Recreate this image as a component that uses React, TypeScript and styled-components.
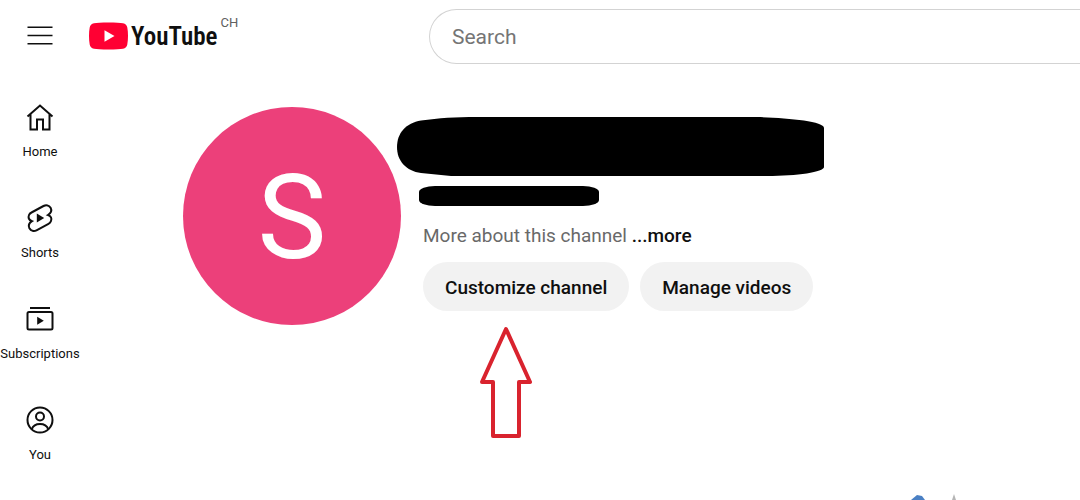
import React from "react";
import styled, { createGlobalStyle } from "styled-components";

const GlobalStyle = createGlobalStyle`
  * { box-sizing: border-box; }
  body {
    margin: 0;
    background: #fff;
    color: #0f0f0f;
    font-family: Roboto, "Liberation Sans", sans-serif;
    overflow-x: hidden;
  }
  button, input { font: inherit; color: inherit; }
`;

const Page = styled.div`
  min-height: 100vh;
  display: flex;
  flex-direction: column;
`;

const Header = styled.header`
  display: flex;
  align-items: center;
  height: 72px;
  padding-left: 24px;
`;

const IconButton = styled.button`
  display: flex;
  padding: 0;
  border: 0;
  background: none;
`;

const HeaderStart = styled.div`
  display: flex;
  align-items: center;
  flex: 0 0 405px;
  gap: 33px;
`;

const Logo = styled.a`
  display: flex;
  align-items: center;
  gap: 3px;
  color: #0f0f0f;
  text-decoration: none;
`;

const Wordmark = styled.span`
  padding-top: 2px;
  font-family: "Roboto Condensed", "Liberation Sans Narrow", "Liberation Sans", sans-serif;
  font-size: 25px;
  font-weight: 600;
  line-height: 28px;
`;

const Country = styled.span`
  align-self: flex-start;
  margin-top: -5px;
  font-size: 13px;
  line-height: 14px;
  color: #606060;
`;

const SearchForm = styled.form`
  flex: 1;
  overflow: hidden;
`;

const SearchInput = styled.input`
  display: block;
  width: 100%;
  height: 55px;
  padding: 2px 22px 0;
  border: 1px solid #d3d3d3;
  border-right: 0;
  border-radius: 28px 0 0 28px;
  background: #fff;
  font-size: 21px;
  outline: 0;
  &::placeholder { color: #757575; opacity: 1; }
`;

const Body = styled.div`
  display: flex;
  flex: 1;
`;

const Sidebar = styled.nav`
  display: flex;
  flex-direction: column;
  flex: 0 0 80px;
  gap: 41px;
  padding-top: 29px;
`;

const NavItem = styled.a`
  display: flex;
  flex-direction: column;
  align-items: center;
  gap: 10px;
  color: #0f0f0f;
  font-size: 13px;
  line-height: 18px;
  white-space: nowrap;
  text-decoration: none;
`;

const Main = styled.main`
  flex: 1;
  display: flex;
  flex-direction: column;
  justify-content: space-between;
  padding: 35px 0 0 103px;
`;

const Channel = styled.section`
  display: flex;
  gap: 22px;
`;

const Avatar = styled.div`
  display: flex;
  align-items: center;
  justify-content: center;
  flex: 0 0 218px;
  height: 218px;
  padding-top: 4px;
  border-radius: 50%;
  background: #ec407a;
  color: #fff;
  font-size: 116px;
  line-height: 116px;
`;

const Details = styled.div`
  display: flex;
  flex-direction: column;
  align-items: flex-start;
  padding-top: 10px;
`;

const NameMask = styled.svg`
  display: block;
  margin-left: -26px;
`;

const HandleMask = styled.div`
  width: 180px;
  height: 20px;
  margin: 9px 0 0 -4px;
  border-radius: 16px / 6px;
  background: #000;
`;

const About = styled.p`
  margin: 18px 0 0;
  font-size: 19px;
  line-height: 24px;
  color: #696969;
`;

const MoreButton = styled.button`
  padding: 0;
  border: 0;
  background: none;
  font-weight: 500;
  color: #0f0f0f;
`;

const Actions = styled.div`
  display: flex;
  gap: 11px;
  margin-top: 14px;
`;

const PillButton = styled.button`
  height: 49px;
  padding: 1px 22px 0;
  border: 0;
  border-radius: 25px;
  background: #f2f2f2;
  font-size: 19px;
  font-weight: 500;
  white-space: nowrap;
`;

const Arrow = styled.svg`
  display: block;
  margin: 15px 0 0 56px;
`;

const Illustration = styled.svg`
  display: block;
  margin-left: 725px;
`;

const iconProps = {
  width: 32,
  height: 32,
  viewBox: "0 0 32 32",
  fill: "none",
  stroke: "#0f0f0f",
  strokeWidth: 2,
  "aria-hidden": true,
} as const;

const HomeIcon = () => (
  <svg {...iconProps}>
    <path d="M3.500 15.500 16 4.500l12.500 11M6.500 13.500v15h6.500v-10h6v10h6.500v-15" />
  </svg>
);

const ShortsIcon = () => (
  <svg {...iconProps}>
    <path d="M7.500 10.500 19.500 4C22 2.700 25 3.200 26.600 5.800 28 8.500 26.800 11.200 24 13 27 14 28 16.500 27 19 26.500 20.500 25.500 21.300 24.500 21.800L12.500 28.300C10 29.600 7 29 5.400 26.300 4 23.500 5.200 21 8 19.200 5 18 4 15.500 5 13 5.500 11.700 6.500 11 7.500 10.500Z" />
    <path d="M12.800 11.500v9l7.400-4.500Z" fill="#0f0f0f" stroke="none" />
  </svg>
);

const SubscriptionsIcon = () => (
  <svg {...iconProps}>
    <path d="M6 5h20" />
    <rect x="3.500" y="9" width="25" height="17.500" rx="1.500" />
    <path d="M13.200 13.800v8l6.600-4Z" fill="#0f0f0f" stroke="none" />
  </svg>
);

const YouIcon = () => (
  <svg {...iconProps}>
    <circle cx="16" cy="16" r="12.500" />
    <circle cx="16" cy="12.500" r="4" />
    <path d="M7.800 25.200c1.200-3.400 4.200-5.200 8.200-5.200s7 1.800 8.200 5.200" />
  </svg>
);

const navItems = [
  { label: "Home", Icon: HomeIcon },
  { label: "Shorts", Icon: ShortsIcon },
  { label: "Subscriptions", Icon: SubscriptionsIcon },
  { label: "You", Icon: YouIcon },
];

export default function App() {
  return (
    <Page>
      <GlobalStyle />
      <Header>
        <HeaderStart>
          <IconButton type="button" aria-label="Menu">
            <svg width="32" height="32" viewBox="0 0 32 32" stroke="#0f0f0f" strokeWidth="1.500">
              <path d="M3.500 7.200h25M3.500 15.500h25M3.500 23.800h25" />
            </svg>
          </IconButton>
          <Logo href="#" aria-label="YouTube home">
            <svg width="39" height="28" viewBox="0 0 39 28" aria-hidden="true">
              <path
                fill="#ff0033"
                d="M19.500.5c7 0 12 .3 14.500.8 2.500.5 3.900 1.900 4.300 4.300.5 2.700.7 5.400.7 8.400s-.2 5.700-.7 8.400c-.4 2.400-1.800 3.800-4.300 4.300-2.500.5-7.500.8-14.500.8s-12-.3-14.500-.8c-2.500-.5-3.900-1.900-4.300-4.300C.2 19.700 0 17 0 14s.2-5.700.7-8.400C1.100 3.200 2.500 1.800 5 1.300 7.500.8 12.500.5 19.500.5Z"
              />
              <path fill="#fff" d="M15.500 8.200v11.600L25.500 14Z" />
            </svg>
            <Wordmark>YouTube</Wordmark>
            <Country>CH</Country>
          </Logo>
        </HeaderStart>
        <SearchForm role="search">
          <SearchInput type="text" placeholder="Search" aria-label="Search" />
        </SearchForm>
      </Header>
      <Body>
        <Sidebar>
          {navItems.map(({ label, Icon }) => (
            <NavItem key={label} href="#">
              <Icon />
              <span>{label}</span>
            </NavItem>
          ))}
        </Sidebar>
        <Main>
          <Channel>
            <Avatar>S</Avatar>
            <Details>
              <NameMask width="428" height="60" viewBox="0 0 428 60" aria-hidden="true">
                <path d="M80 0H360C390 1 427 4 427 11V50C427 55 400 59 370 59H54L24 56C9 54 0 44 0 30S9 6 24 3.500C42 1 58 0 80 0Z" />
              </NameMask>
              <HandleMask />
              <About>
                More about this channel <MoreButton type="button">...more</MoreButton>
              </About>
              <Actions>
                <PillButton type="button">Customize channel</PillButton>
                <PillButton type="button">Manage videos</PillButton>
              </Actions>
              <Arrow width="54" height="114" viewBox="0 0 54 114" aria-hidden="true">
                <path
                  d="M27 3 51 56H40V110H14V56H3Z"
                  fill="none"
                  stroke="#d9232e"
                  strokeWidth="4"
                  strokeLinejoin="round"
                />
              </Arrow>
            </Details>
          </Channel>
          <Illustration width="60" height="6" viewBox="0 0 60 6" aria-hidden="true">
            <path d="M3 6 9 1l5 1 3 4Z" fill="#4a80c4" />
            <path d="M44 6 46 0l2 6Z" fill="#b5b5b5" />
          </Illustration>
        </Main>
      </Body>
    </Page>
  );
}
